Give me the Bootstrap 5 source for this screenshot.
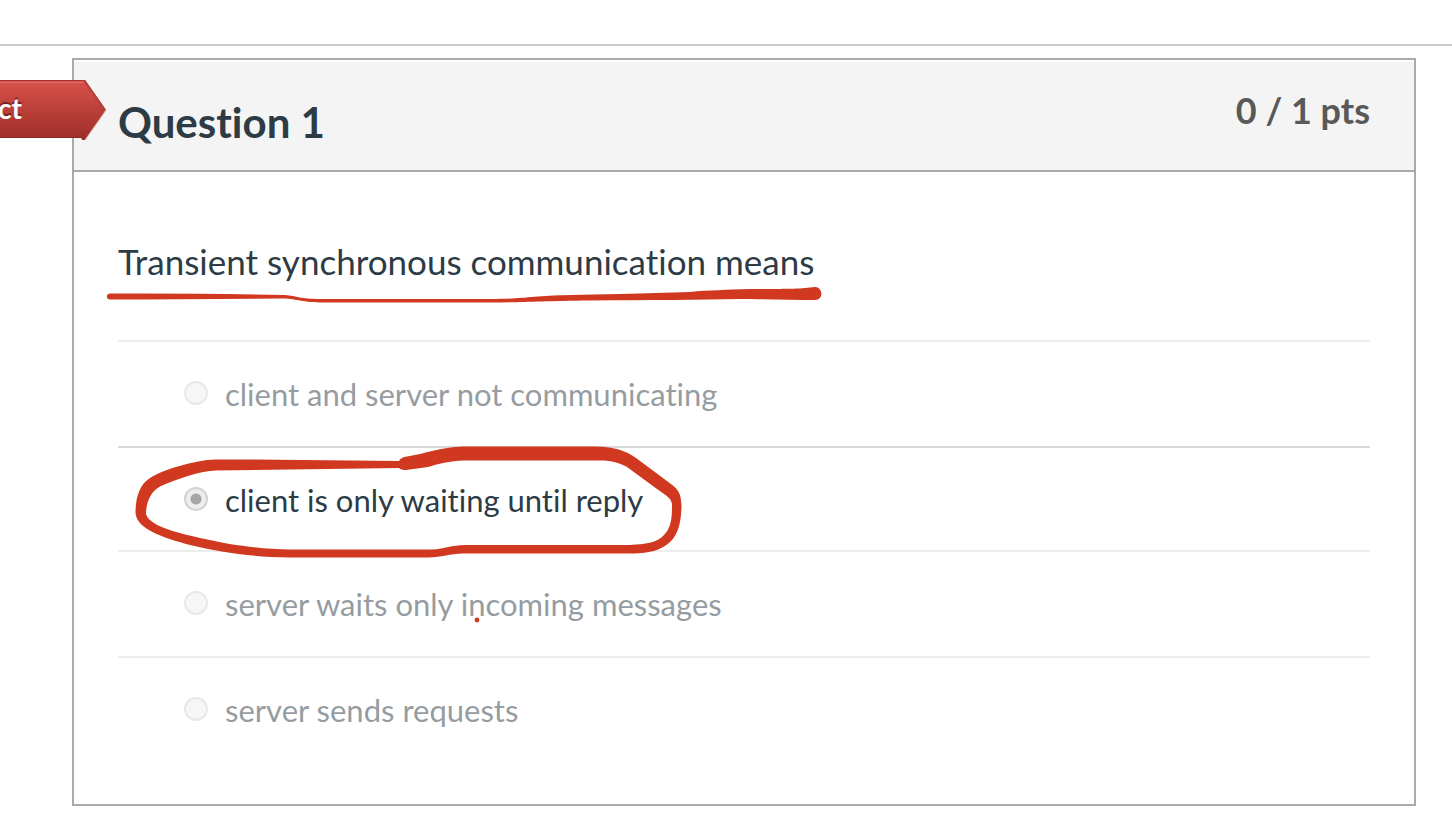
<!DOCTYPE html>
<html lang="en">
<head>
<meta charset="utf-8">
<meta name="viewport" content="width=device-width, initial-scale=1">
<title>Question 1</title>
<link href="https://cdn.jsdelivr.net/npm/bootstrap@5.3.0/dist/css/bootstrap.min.css" rel="stylesheet">
<style>
  :root { --ink: #2d3b45; --frame: #aaa; --pen: #d13820; }
  body { font-family: Lato, sans-serif; font-variant-ligatures: none; color: var(--ink); background: #fff; overflow-x: hidden; }
  .top-rule { height: 46px; border-bottom: 2px solid #c7cdd1; }
  .question { margin: 12px 36px 30px 72px; border: 2px solid var(--frame); }
  .question-head { margin-top: 2px; height: 110px; padding: 0 44px; background: #f4f4f4; border-bottom: 2px solid var(--frame); }
  .question-title { font-size: 42px; line-height: 52px; font-weight: 700; margin-top: 34px; }
  .points { font-size: 36px; line-height: 46px; font-weight: 700; color: #595959; margin-top: 25px; }
  .question-body { padding: 64px 44px 42px; }
  .prompt { font-size: 35px; line-height: 50px; margin: 0 0 54px; }
  .answer { min-height: 106px; padding: 30px 0 0 66px; border-top: 2px solid #ededed; }
  .answer label { font-size: 31px; line-height: 44px; margin-left: 17px; opacity: .5; }
  .answer input { appearance: none; width: 24px; height: 24px; margin: 9px 0 0; border: 2px solid #e8e8e8; border-radius: 50%; background: #f6f6f6; }
  .answer.chosen { min-height: 104px; border-top-color: #d9d9d9; }
  .answer.chosen label { opacity: 1; }
  .answer.chosen input { border-color: #d2d2d2; background: radial-gradient(circle, #a6a6a6 5px, #eee 6px); }
  .verdict { left: -74px; top: 20px; width: 106px; height: 60px; }
  .verdict span { position: relative; display: block; color: #fff; font-size: 28px; line-height: 56px; font-weight: 700; text-shadow: 0 -2px 0 #7a1f1a; text-indent: -2px; }
  .pen { fill: var(--pen); overflow: visible; pointer-events: none; z-index: 1; }
  .pen-line { left: -12px; top: 50px; }
  .pen-ring { left: 16px; top: -4px; }
  .pen-dot { left: 356px; top: 65px; }
</style>
</head>
<body>
<div class="top-rule"></div>
<main class="question position-relative">
  <div class="question-head d-flex justify-content-between align-items-start">
    <h1 class="question-title mb-0">Question 1</h1>
    <div class="points">0 / 1 pts</div>
  </div>
  <div class="verdict position-absolute">
    <svg class="position-absolute top-0 start-0" width="106" height="60" viewBox="0 0 106 60" aria-hidden="true">
      <defs>
        <linearGradient id="red" x1="0" y1="0" x2="0" y2="1"><stop offset="0" stop-color="#da524b"/><stop offset="1" stop-color="#9c2e27"/></linearGradient>
      </defs>
      <path d="M0 0H85L106 30L85 60H82V58H0Z" fill="url(#red)"/>
      <path d="M0 .5H85" stroke="#a7342d" stroke-width="1"/>
      <path d="M84 0L105 30" fill="none" stroke="#b0423b" stroke-width="2"/>
      <path d="M0 2.500H83" stroke="#d9706a" stroke-width="1"/>
      <path d="M0 57.500H82V59" fill="none" stroke="#8f2822" stroke-width="1"/>
      <path d="M85 60L106 30" fill="none" stroke="#d9aaa6" stroke-width="1"/>
    </svg>
    <span>ct</span>
  </div>
  <form class="question-body">
    <div class="position-relative">
      <p class="prompt">Transient synchronous communication means</p>
      <svg class="pen pen-line position-absolute" width="716" height="16" viewBox="106 286 716 16" aria-hidden="true">
        <path d="M109.500 293.500Q190 293 285 295C297 296 300 299 320 299H490C525 299 530 296 570 295Q630 294 690 292C710 290 725 290 750 289C785 289 800 289 815 287C823 287 824 300 815 300C790 300 760 299 740 299C700 300 650 300 590 300.500C540 301 520 302.500 490 302.500H320C300 302 297 298.500 280 298.500Q190 299 109.500 299.500C106 299 106 294 109.500 293.500Z"/>
      </svg>
    </div>
    <div class="answer d-flex align-items-start">
      <input type="radio" name="answer" id="a1" disabled><label for="a1">client and server not communicating</label>
    </div>
    <div class="answer chosen position-relative d-flex align-items-start">
      <input type="radio" name="answer" id="a2" checked disabled><label for="a2">client is only waiting until reply</label>
      <svg class="pen pen-ring position-absolute" width="548" height="114" viewBox="134 444 548 114" aria-hidden="true">
        <path fill-rule="evenodd" d="M215 459.500H250L399 461Q401 457 407 456.500C425 454 440 447 463 446.500H595C616 447 626 451 636 458L671 484C679 490 681 494 681.500 506C681 524 678 538 665 546C655 552 645 553 634 553.500H463C450 554 442 557 428 557.500H290C250 557 220 552 190 545C165 538 137 530 135.500 513C135.500 497 140 484 150 478C162 470 195 460 215 459.500ZM216 470.500C200 471 180 478 161 486C150 491 146 504 146 514C149 525 172 532 205 539C230 545 262 549 290 549.500H432C446 549 450 545 466 545H630C645 544 657 543 664 535C672 527 672 515 672 504C671 498 667 496 657 489L627 467C618 462 610 460.500 600 460.500H463C451 461 437 464 428 467L406 470Q401 470 399 468Z"/>
      </svg>
    </div>
    <div class="answer position-relative d-flex align-items-start">
      <input type="radio" name="answer" id="a3" disabled><label for="a3">server waits only incoming messages</label>
      <svg class="pen pen-dot position-absolute" width="6" height="6" viewBox="0 0 6 6" aria-hidden="true"><circle cx="3" cy="3" r="2.400"/></svg>
    </div>
    <div class="answer d-flex align-items-start">
      <input type="radio" name="answer" id="a4" disabled><label for="a4">server sends requests</label>
    </div>
  </form>
</main>
<script src="https://cdn.jsdelivr.net/npm/bootstrap@5.3.0/dist/js/bootstrap.bundle.min.js"></script>
</body>
</html>
